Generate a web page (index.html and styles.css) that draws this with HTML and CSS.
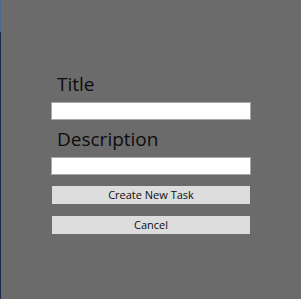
FILE: index.html
```html
<!doctype html>
<html lang="en">
	<head>
		<meta charset="UTF-8" />
		<title>New Task</title>
		<link rel="stylesheet" href="styles.css">
	</head>
	<body>
		<div class="edge"></div>
		<div class="dialog">
			<div class="form">
				<label class="field-label" for="title">Title</label>
				<input type="text" id="title" class="field" />

				<label class="field-label" for="description">Description</label>
				<input type="text" id="description" class="field" />

				<button class="btn btn-create">Create New Task</button>
				<button class="btn btn-cancel">Cancel</button>
			</div>
		</div>
	</body>
</html>
```
FILE: styles.css
```css
html,
body {
	margin: 0;
	height: 100%;
}
body {
	display: flex;
	background-color: #6b6b6b;
	font-family: "Open Sans", "Noto Sans", sans-serif;
}
.edge {
	width: 1px;
	flex-shrink: 0;
	background: linear-gradient(#4b6a93 0, #4b6a93 32px, #1c2a4a 32px);
}
.dialog {
	flex: 1;
	padding: 72px 50px 0 50px;
}
.form {
	display: flex;
	flex-direction: column;
	width: 200px;
}
.field-label {
	font-size: 19px;
	line-height: 25px;
	color: #0d0d0d;
	padding-left: 6px;
	margin-bottom: 5px;
}
.field {
	box-sizing: border-box;
	height: 18px;
	width: 200px;
	margin: 0 0 7px 0;
	padding: 0 3px;
	border: 1px solid #a8a8a8;
	background-color: white;
	outline: none;
}
.btn {
	box-sizing: border-box;
	height: 18px;
	width: 198px;
	margin-left: 1px;
	padding: 0;
	border: none;
	background-color: #dddddd;
	color: #0d0d0d;
	font-family: "Open Sans", "Noto Sans", sans-serif;
	font-size: 11px;
	line-height: 18px;
}
.btn-create {
	margin-top: 4px;
}
.btn-cancel {
	margin-top: 12px;
}
```
